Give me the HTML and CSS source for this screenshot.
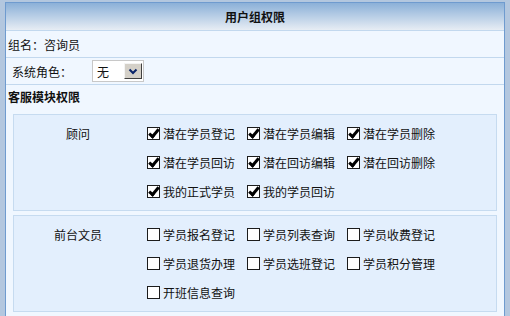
FILE: index.html
```html
<!DOCTYPE html>
<html lang="zh-CN">
<head>
	<meta charset="UTF-8">
	<title>用户组权限</title>
	<link rel="stylesheet" href="styles.css">
</head>
<body>
	<div class="panel">
		<div class="panel-head">用户组权限</div>
		<div class="row row-name">组名：咨询员</div>
		<div class="row row-role">
			<span class="role-label">系统角色：</span>
			<span class="select">
				<span class="select-text">无</span>
				<span class="select-btn">
					<svg width="10" height="7" viewBox="0 0 10 7"><polyline points="1.5,1.5 5,5 8.5,1.5" fill="none" stroke="#0a246a" stroke-width="2"/></svg>
				</span>
			</span>
		</div>
		<div class="row-title">客服模块权限</div>
		<div class="section">
			<div class="box">
				<div class="group-name">顾问</div>
				<div class="opts">
					<label class="opt"><span class="cb on"></span>潜在学员登记</label>
					<label class="opt"><span class="cb on"></span>潜在学员编辑</label>
					<label class="opt"><span class="cb on"></span>潜在学员删除</label>
					<label class="opt"><span class="cb on"></span>潜在学员回访</label>
					<label class="opt"><span class="cb on"></span>潜在回访编辑</label>
					<label class="opt"><span class="cb on"></span>潜在回访删除</label>
					<label class="opt"><span class="cb on"></span>我的正式学员</label>
					<label class="opt"><span class="cb on"></span>我的学员回访</label>
				</div>
			</div>
			<div class="box">
				<div class="group-name">前台文员</div>
				<div class="opts">
					<label class="opt"><span class="cb"></span>学员报名登记</label>
					<label class="opt"><span class="cb"></span>学员列表查询</label>
					<label class="opt"><span class="cb"></span>学员收费登记</label>
					<label class="opt"><span class="cb"></span>学员退货办理</label>
					<label class="opt"><span class="cb"></span>学员选班登记</label>
					<label class="opt"><span class="cb"></span>学员积分管理</label>
					<label class="opt"><span class="cb"></span>开班信息查询</label>
				</div>
			</div>
		</div>
	</div>
</body>
</html>
```

FILE: styles.css
```css
body {
	margin: 0;
	background-color: #b3c7df;
	font-family: "Noto Sans CJK SC", "Noto Sans", sans-serif;
	font-size: 12px;
	color: #111;
}

.panel {
	box-sizing: border-box;
	width: 500px;
	margin: 2px 0 0 5px;
	border: 1px solid #6f9bcf;
	background-color: #f0f7ff;
}

.panel-head {
	height: 27px;
	line-height: 27px;
	text-align: center;
	font-weight: bold;
	background: linear-gradient(#8bb0d8, #e7edf4);
	border-bottom: 1px solid #c2d8ee;
}

.row {
	display: flex;
	align-items: center;
	height: 26px;
	border-bottom: 1px solid #c2d8ee;
}

.row-name {
	padding-left: 2px;
}

.row-role {
	padding-left: 6px;
}

.role-label {
	width: 80px;
}

.select {
	box-sizing: border-box;
	display: flex;
	align-items: center;
	width: 52px;
	height: 22px;
	border: 1px solid #c8c8c8;
	background-color: #fff;
}

.select-text {
	flex: 1;
	padding-left: 4px;
}

.select-btn {
	box-sizing: border-box;
	display: flex;
	align-items: center;
	justify-content: center;
	width: 18px;
	height: 16px;
	margin-right: 1px;
	background-color: #d4d0c8;
	border: 1px solid;
	border-color: #f4f4f4 #404040 #404040 #f4f4f4;
}

.row-title {
	height: 24px;
	line-height: 24px;
	padding-left: 2px;
	font-weight: bold;
}

.section {
	padding: 5px 7px 0 7px;
}

.box {
	display: flex;
	padding: 4px 0;
	margin-bottom: 4px;
	border: 1px solid #c6dbf0;
	background-color: #e3effd;
}

.group-name {
	width: 128px;
	line-height: 29px;
	text-align: center;
}

.opts {
	display: grid;
	grid-template-columns: repeat(3, 100px);
	margin-left: 5px;
}

.opt {
	display: flex;
	align-items: center;
	height: 29px;
}

.cb {
	box-sizing: border-box;
	position: relative;
	width: 13px;
	height: 13px;
	margin-right: 3px;
	border: 1px solid #1c1c1c;
	background-color: #fff;
}

.cb.on::after {
	content: "";
	position: absolute;
	left: 3px;
	top: -1px;
	width: 3px;
	height: 8px;
	border: solid #000;
	border-width: 0 3px 3px 0;
	transform: rotate(40deg);
}
```
